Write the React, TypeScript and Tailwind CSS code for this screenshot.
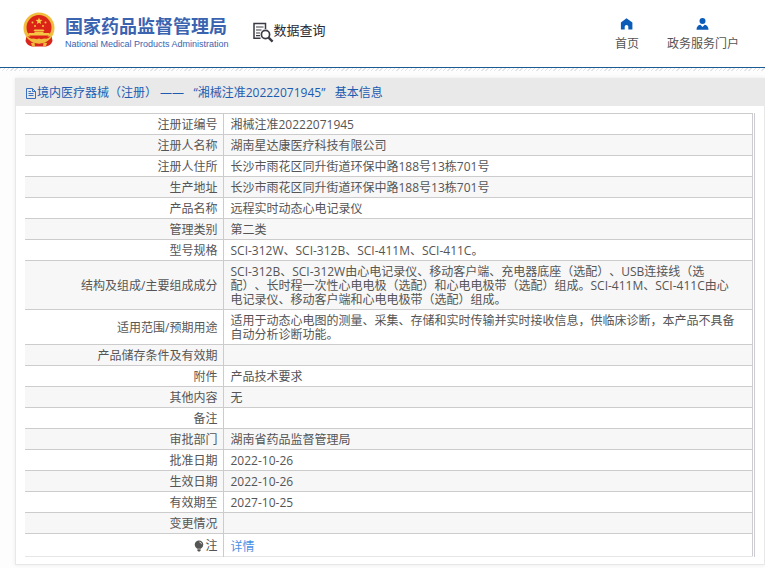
import React from 'react';

type Row = { label: string; value: string };

const ROWS: Row[] = [
  { label: '注册证编号', value: '湘械注准20222071945' },
  { label: '注册人名称', value: '湖南星达康医疗科技有限公司' },
  { label: '注册人住所', value: '长沙市雨花区同升街道环保中路188号13栋701号' },
  { label: '生产地址', value: '长沙市雨花区同升街道环保中路188号13栋701号' },
  { label: '产品名称', value: '远程实时动态心电记录仪' },
  { label: '管理类别', value: '第二类' },
  { label: '型号规格', value: 'SCI-312W、SCI-312B、SCI-411M、SCI-411C。' },
  {
    label: '结构及组成/主要组成成分',
    value:
      'SCI-312B、SCI-312W由心电记录仪、移动客户端、充电器底座（选配）、USB连接线（选配）、长时程一次性心电电极（选配）和心电电极带（选配）组成。SCI-411M、SCI-411C由心电记录仪、移动客户端和心电电极带（选配）组成。',
  },
  {
    label: '适用范围/预期用途',
    value: '适用于动态心电图的测量、采集、存储和实时传输并实时接收信息，供临床诊断，本产品不具备自动分析诊断功能。',
  },
  { label: '产品储存条件及有效期', value: '' },
  { label: '附件', value: '产品技术要求' },
  { label: '其他内容', value: '无' },
  { label: '备注', value: '' },
  { label: '审批部门', value: '湖南省药品监督管理局' },
  { label: '批准日期', value: '2022-10-26' },
  { label: '生效日期', value: '2022-10-26' },
  { label: '有效期至', value: '2027-10-25' },
  { label: '变更情况', value: '' },
];

function Emblem() {
  return (
    <svg viewBox="0 0 64 70" className="h-[35px] w-8 shrink-0" aria-hidden="true">
      <path d="M8 42 L5 58 Q8 67 18 69 L46 69 Q56 67 59 58 L56 42 Z" fill="#d8261c" />
      <circle cx="32" cy="32" r="31" fill="#f0bd3e" />
      <circle cx="32" cy="31" r="25" fill="#dc2318" />
      <path d="M32 11 l1.9 4.6 5 .4 -3.8 3.2 1.2 4.8 -4.3 -2.6 -4.3 2.6 1.2 -4.8 -3.8 -3.2 5 -.4z" fill="#f7cf45" />
      <g fill="#f4c542">
        <circle cx="19" cy="21" r="2" />
        <circle cx="45" cy="21" r="2" />
        <circle cx="24" cy="28" r="2" />
        <circle cx="40" cy="28" r="2" />
        <path d="M23 35 H41 L43 38 H21 Z" />
        <path d="M23 39 H41 V42 H53 V47 H11 V42 H23 Z" />
      </g>
      <path d="M9 49 H55 Q47 56 32 56 Q17 56 9 49 Z" fill="#dc2318" />
      <path d="M14 54 Q23 51 32 56 Q41 51 50 54 L45 60 Q38 58 32 61 Q26 58 19 60 Z" fill="#f0bd3e" />
      <circle cx="32" cy="58" r="5" fill="#f0bd3e" />
      <path d="M16 62 L23 61 L24 69 L18 68 Z M48 62 L41 61 L40 69 L46 68 Z" fill="#eeb93c" />
    </svg>
  );
}

function SearchDocIcon() {
  return (
    <svg viewBox="0 0 21 21" className="h-[21px] w-[21px] shrink-0" fill="none" stroke="#3a3a44" aria-hidden="true">
      <path d="M7.5 16.2 H1 V1.5 H12.5 V7" strokeWidth="1.5" />
      <path d="M3 5 H10.5 M3 8 H8.5 M3 11 H7 M3 13.6 H7" strokeWidth="1.2" />
      <circle cx="12.5" cy="12.5" r="4.1" strokeWidth="1.7" />
      <path d="M15.6 15.6 L19.6 19.6" strokeWidth="2.4" />
    </svg>
  );
}

function HomeIcon() {
  return (
    <svg viewBox="0 0 13 12" className="h-3 w-[13px]" fill="#0b5cb8" aria-hidden="true">
      <path d="M6.5 0.2 L12.4 4.6 V11.6 H8.3 V8.6 Q8.3 7.1 6.5 7.1 Q4.7 7.1 4.7 8.6 V11.6 H0.9 V4.6 Z" />
    </svg>
  );
}

function UserIcon() {
  return (
    <svg viewBox="0 0 13 12" className="h-3 w-[13px]" fill="#0b5cb8" aria-hidden="true">
      <circle cx="6.5" cy="3.1" r="3" />
      <path d="M0.5 11.7 Q0.6 7.6 4.3 6.8 L6.5 9 L8.7 6.8 Q12.4 7.6 12.5 11.7 Z" />
    </svg>
  );
}

function FileIcon() {
  return (
    <svg viewBox="0 0 11 12" className="h-3 w-[11px] shrink-0" fill="none" stroke="#3a70be" aria-hidden="true">
      <path d="M0.5 1.5 H6.5 L9.5 4.5 V11.5 H0.5 Z M6.5 1.5 V4.5 H9.5" />
      <path d="M2.5 4.5 H5 M2.5 6.5 H7.5 M2.5 8.5 H7.5" />
    </svg>
  );
}

function BulbIcon() {
  return (
    <svg viewBox="0 0 10 12" className="h-3 w-[10px]" fill="#555" aria-hidden="true">
      <path d="M5 0.5 A4.3 4.2 0 0 1 9.3 4.7 Q9.3 6.8 6.8 8.8 H3.2 Q0.7 6.8 0.7 4.7 A4.3 4.2 0 0 1 5 0.5 Z" />
      <path d="M3.4 9.3 H6.6 V10.6 L5.8 11.5 H4.2 L3.4 10.6 Z" />
      <path d="M5.3 2 Q7.3 2.2 7.6 4.2" fill="none" stroke="#fff" strokeWidth="0.7" />
    </svg>
  );
}

export default function App() {
  return (
    <div className="min-h-screen bg-[#fdfdfd] pb-1 font-['Open_Sans','Noto_Sans_CJK_SC',sans-serif] text-xs text-[#555] [text-spacing-trim:space-all]" lang="zh-CN">
      <header className="flex h-[68px] items-start justify-between border-b border-[#1b5a92] bg-white pr-[26px] pl-[23px]">
        <div className="flex items-start">
          <a href="#" className="flex items-start gap-[10px] pt-3">
            <Emblem />
            <span className="flex flex-col pt-1 text-[#3a63b0]">
              <span className="text-lg leading-5 font-bold whitespace-nowrap">国家药品监督管理局</span>
              <span className="pt-0.5 font-['Liberation_Sans',sans-serif] text-[9px] leading-3 whitespace-nowrap">
                National Medical Products Administration
              </span>
            </span>
          </a>
          <a href="#" className="ml-6 flex items-start pt-[22px] text-[#2a2a33]">
            <SearchDocIcon />
            <span className="text-[13px] leading-4 whitespace-nowrap">数据查询</span>
          </a>
        </div>
        <nav className="flex gap-7 pt-[18px] text-[#555]">
          <a href="#" className="flex flex-col items-center gap-[5px]">
            <HomeIcon />
            <span className="leading-[18px] whitespace-nowrap">首页</span>
          </a>
          <a href="#" className="flex flex-col items-center gap-[5px]">
            <UserIcon />
            <span className="leading-[18px] whitespace-nowrap">政务服务门户</span>
          </a>
        </nav>
      </header>
      <div className="h-[3px] bg-[repeating-linear-gradient(135deg,#e4e4e4_0px,#e4e4e4_1px,#ffffff_1px,#ffffff_3px)]" />

      <main className="mt-[7px] ml-[15px] border border-t-0 border-[#e8e8e8] bg-white shadow-[0_0_4px_rgba(0,0,0,0.08)]">
        <h1 className="flex h-7 items-center bg-[#e9e9e9] pt-0.5 pl-[10px] font-normal text-[#1d5bb0]">
          <FileIcon />
          <span className="leading-[18px] whitespace-pre">境内医疗器械（注册） ——   “湘械注准20222071945”   基本信息</span>
        </h1>
        <div className="mt-[7px] mr-[9px] mb-[7px] ml-[9px] border-r border-[#ccccd2] pr-px">
          <table className="w-full table-fixed border-collapse border-r border-[#ccccd2] leading-[14px]">
            <colgroup>
              <col className="w-[198px]" />
              <col />
            </colgroup>
            <tbody>
              {ROWS.map((r, i) => (
                <tr key={i} className="border-t border-[#ccc] even:bg-[#f7f7f7]">
                  <th scope="row" className="h-[21px] border-r border-[#ccc] pt-1 pr-[5px] pb-0.5 text-right font-normal">{r.label}</th>
                  <td className="pt-1 pr-[15px] pb-0.5 pl-[7px]">{r.value}</td>
                </tr>
              ))}
              <tr className="border-t border-b border-t-[#ccc] border-b-[#e6e6e6]">
                <th scope="row" className="h-[23px] border-r border-[#ccc] pt-0.5 pr-[5px] text-right font-normal">
                  <span className="flex items-center justify-end gap-px"><BulbIcon />注</span>
                </th>
                <td className="pt-1 pl-[7px]"><a href="#" className="text-[#4a90e2]">详情</a></td>
              </tr>
            </tbody>
          </table>
        </div>
      </main>
    </div>
  );
}
